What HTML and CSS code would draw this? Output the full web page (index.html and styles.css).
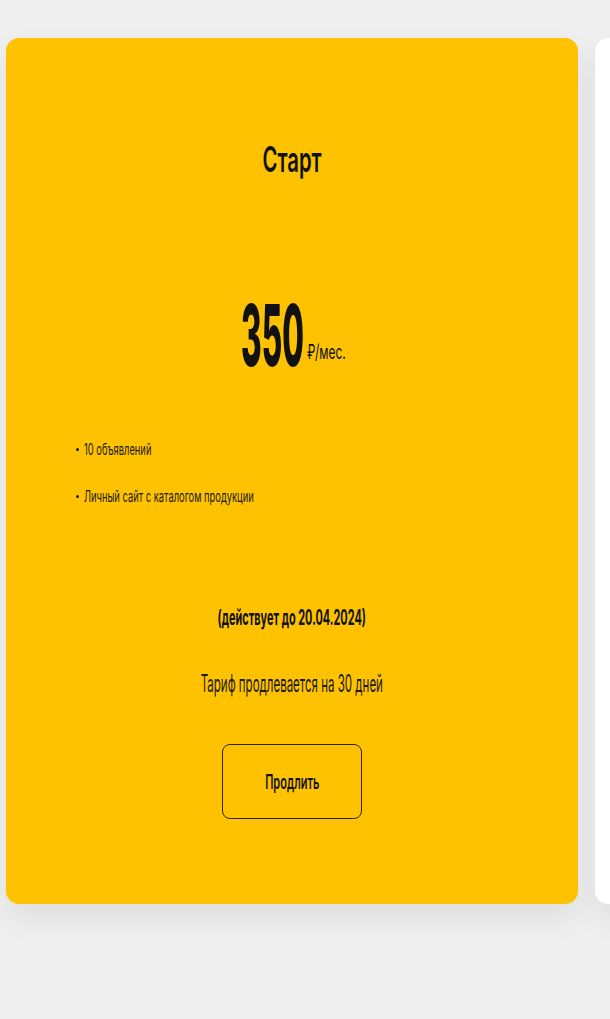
FILE: index.html
```html
<!DOCTYPE html>
<html lang="ru">
<head>
<meta charset="utf-8">
<title>Тарифы</title>
<link rel="stylesheet" href="styles.css">
</head>
<body>
<div class="page">
  <section class="card card--active">
    <h2 class="title"><span class="sx sx--title">Старт</span></h2>
    <div class="price">
      <span class="box box--num"><span class="sx sx--num">350</span></span><span class="box box--unit"><span class="sx sx--unit">₽/мес.</span></span>
    </div>
    <ul class="features">
      <li class="feature"><span class="sx sx--feat">10 объявлений</span></li>
      <li class="feature"><span class="sx sx--feat">Личный сайт с каталогом продукции</span></li>
    </ul>
    <p class="valid"><span class="sx sx--valid">(действует до 20.04.2024)</span></p>
    <p class="note"><span class="sx sx--note">Тариф продлевается на 30 дней</span></p>
    <button class="btn" type="button"><span class="sx sx--btn">Продлить</span></button>
  </section>
  <section class="card card--next"></section>
</div>
</body>
</html>
```

FILE: styles.css
```css
* { box-sizing: border-box; }
html, body { margin: 0; padding: 0; }
body {
  background: #efefef;
  font-family: Inter, "Noto Sans", "DejaVu Sans", sans-serif;
  color: #111;
  overflow: hidden;
}
.page {
  display: flex;
  gap: 17px;
  padding: 38px 0 0 6px;
  width: 610px;
  height: 1019px;
  overflow: hidden;
}
.card {
  flex: 0 0 572px;
  border-radius: 13px;
  box-shadow: 0 14px 30px rgba(0, 0, 0, 0.07);
}
.card--active {
  background: #fec200;
  display: flex;
  flex-direction: column;
  align-items: center;
  padding: 104px 0 0;
  height: 866px;
}
.card--next {
  background: #fff;
  height: 866px;
}
.sx {
  display: inline-block;
  white-space: nowrap;
  transform-origin: center center;
}
.title {
  margin: 0;
  font-size: 35px;
  line-height: 1;
  font-weight: 600;
  text-align: center;
}
.sx--title { transform: scaleX(0.58); }

.price {
  margin-top: 109px;
  font-size: 85px;
  line-height: 1;
  text-align: center;
  white-space: nowrap;
}
.box { display: inline-block; vertical-align: baseline; }
.box--num { width: 58px; }
.box--unit { width: 37px; margin-left: 8px; vertical-align: 7px; }
.sx--num, .sx--unit { transform-origin: left center; }
.sx--num { font-weight: 800; transform: scaleX(0.37); }
.sx--unit { font-size: 20px; font-weight: 400; transform: scaleX(0.6); }

.features {
  list-style: none;
  margin: 63px 0 0;
  padding: 0 0 0 70px;
  align-self: stretch;
  display: flex;
  flex-direction: column;
  gap: 31px;
}
.feature {
  display: flex;
  align-items: center;
  gap: 5px;
  font-size: 16px;
  line-height: 1;
  font-weight: 400;
  color: #1c1a10;
}
.feature::before {
  content: "";
  flex: 0 0 3px;
  height: 3px;
  border-radius: 50%;
  background: #1c1a10;
}
.sx--feat { transform-origin: left center; transform: scaleX(0.585); }

.valid {
  margin: 103px 0 0;
  font-size: 21px;
  line-height: 1;
  font-weight: 700;
  text-align: center;
}
.sx--valid { transform: scaleX(0.52); }

.note {
  margin: 44px 0 0;
  font-size: 24px;
  line-height: 1;
  font-weight: 400;
  text-align: center;
  color: #1c1a10;
}
.sx--note { transform: scaleX(0.48); }

.btn {
  margin-top: 48px;
  width: 140px;
  height: 75px;
  border: 1px solid #2a2410;
  border-radius: 8px;
  background: transparent;
  font-family: inherit;
  font-size: 20px;
  line-height: 1;
  font-weight: 600;
  color: #111;
  display: flex;
  align-items: center;
  justify-content: center;
  padding: 0;
}
.sx--btn { transform: scaleX(0.55); }
```
